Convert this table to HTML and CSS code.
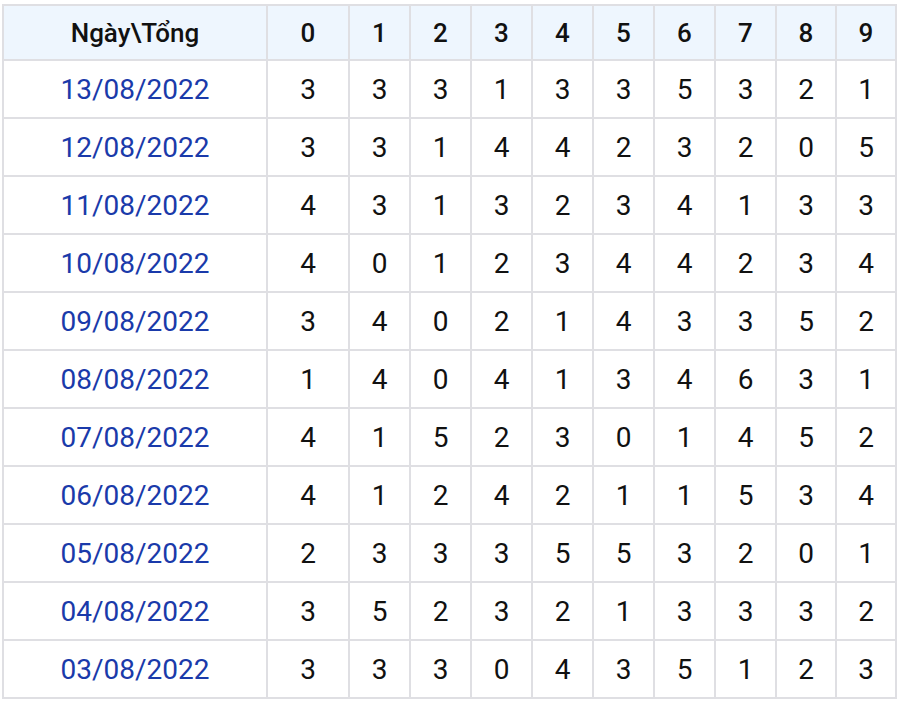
FILE: index.html
```html
<!DOCTYPE html>
<html lang="vi">
<head>
<meta charset="utf-8">
<title>Thống kê tổng</title>
<link rel="stylesheet" href="styles.css">
</head>
<body>
<table class="stats">
  <colgroup>
    <col class="c-date"><col class="c-first">
    <col class="c-n"><col class="c-n"><col class="c-n"><col class="c-n"><col class="c-n"><col class="c-n"><col class="c-n"><col class="c-n2"><col class="c-n2">
  </colgroup>
  <thead>
    <tr><th>Ngày\Tổng</th><th>0</th><th>1</th><th>2</th><th>3</th><th>4</th><th>5</th><th>6</th><th>7</th><th>8</th><th>9</th></tr>
  </thead>
  <tbody>
    <tr><td class="date">13/08/2022</td><td>3</td><td>3</td><td>3</td><td>1</td><td>3</td><td>3</td><td>5</td><td>3</td><td>2</td><td>1</td></tr>
    <tr><td class="date">12/08/2022</td><td>3</td><td>3</td><td>1</td><td>4</td><td>4</td><td>2</td><td>3</td><td>2</td><td>0</td><td>5</td></tr>
    <tr><td class="date">11/08/2022</td><td>4</td><td>3</td><td>1</td><td>3</td><td>2</td><td>3</td><td>4</td><td>1</td><td>3</td><td>3</td></tr>
    <tr><td class="date">10/08/2022</td><td>4</td><td>0</td><td>1</td><td>2</td><td>3</td><td>4</td><td>4</td><td>2</td><td>3</td><td>4</td></tr>
    <tr><td class="date">09/08/2022</td><td>3</td><td>4</td><td>0</td><td>2</td><td>1</td><td>4</td><td>3</td><td>3</td><td>5</td><td>2</td></tr>
    <tr><td class="date">08/08/2022</td><td>1</td><td>4</td><td>0</td><td>4</td><td>1</td><td>3</td><td>4</td><td>6</td><td>3</td><td>1</td></tr>
    <tr><td class="date">07/08/2022</td><td>4</td><td>1</td><td>5</td><td>2</td><td>3</td><td>0</td><td>1</td><td>4</td><td>5</td><td>2</td></tr>
    <tr><td class="date">06/08/2022</td><td>4</td><td>1</td><td>2</td><td>4</td><td>2</td><td>1</td><td>1</td><td>5</td><td>3</td><td>4</td></tr>
    <tr><td class="date">05/08/2022</td><td>2</td><td>3</td><td>3</td><td>3</td><td>5</td><td>5</td><td>3</td><td>2</td><td>0</td><td>1</td></tr>
    <tr><td class="date">04/08/2022</td><td>3</td><td>5</td><td>2</td><td>3</td><td>2</td><td>1</td><td>3</td><td>3</td><td>3</td><td>2</td></tr>
    <tr><td class="date">03/08/2022</td><td>3</td><td>3</td><td>3</td><td>0</td><td>4</td><td>3</td><td>5</td><td>1</td><td>2</td><td>3</td></tr>
  </tbody>
</table>
</body>
</html>
```

FILE: styles.css
```css
html, body {
  margin: 0;
  background: #ffffff;
}
body {
  padding: 4px 2px 0 2px;
  font-family: Roboto, "Noto Sans", Arial, sans-serif;
}
.stats {
  border-collapse: separate;
  border-spacing: 0;
  table-layout: fixed;
  width: 895px;
  border-top: 2px solid #dfdfe3;
  border-left: 2px solid #dfdfe3;
}
.c-date { width: 264px; }
.c-first { width: 82px; }
.c-n { width: 61px; }
.c-n2 { width: 60px; }
.stats th,
.stats td {
  box-sizing: border-box;
  border-right: 2px solid #dfdfe3;
  border-bottom: 2px solid #dfdfe3;
  text-align: center;
  vertical-align: middle;
  padding: 0;
  color: #111111;
}
.stats th {
  height: 55px;
  background: #eef6fe;
  font-size: 26px;
  font-weight: 500;
}
.stats td {
  height: 58px;
  font-size: 28px;
  font-weight: 400;
}
.stats td.date {
  color: #1a3aaa;
}
```
